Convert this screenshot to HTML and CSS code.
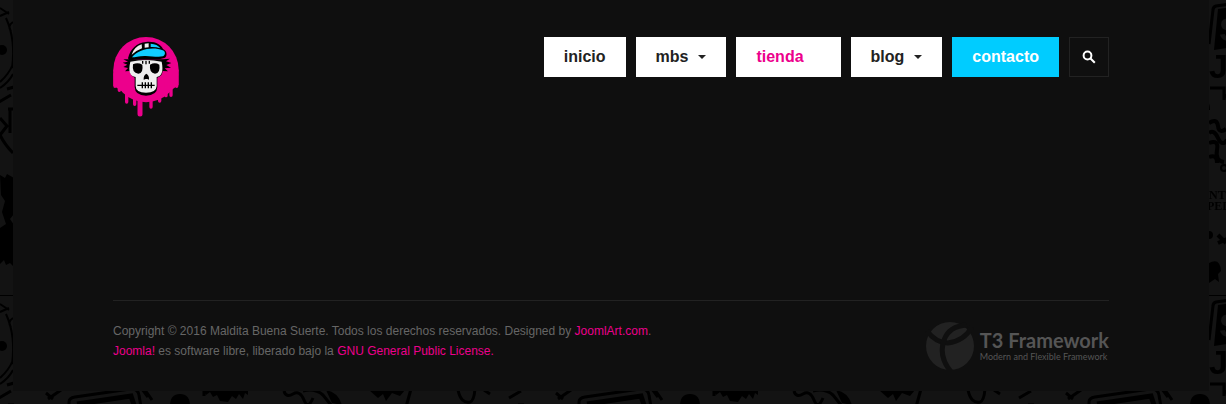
FILE: index.html
```html
<!DOCTYPE html>
<html lang="es">
<head>
    <meta charset="UTF-8">
    <meta name="viewport" content="width=device-width, initial-scale=1.0">
    <title>Maldita Buena Suerte</title>
    <link rel="stylesheet" href="styles.css">
</head>
<body>
    <!-- doodle wallpaper, one 510x296 tile -->
    <svg class="wallpaper" aria-hidden="true">
        <defs>
            <pattern id="doodles" x="-13" y="0" width="510" height="296" patternUnits="userSpaceOnUse">
                <g fill="none" stroke="#000" stroke-width="3">
                    <path d="M0 295.500H510" stroke-width="1"/>
                    <path d="M13 16l9-4M13 8l9 6M19 18q10 22 6 50M26 22q-6 4-2 9M13 82q9-8 13-18M13 88q9-6 13-14" stroke-width="2"/>
                    <path d="M12 102l12-7M20 89l7-2M13 118l7 8-7 9M13 135q5 10 13 18M21 109h6M23 109v24"/>
                    <path d="M61 103l13-9M59 97l7 6M158 94l7 10M155 93l6 8"/>
                    <path d="M82 112v-6q0-4 6-5l55-8q8-1 9 6l2 12"/>
                    <path d="M90 108l54-8 3 9" stroke-width="5"/>
                    <path d="M223 4l-14 2q-3 1-3 4l-4 34M203 88h14v12"/>
                    <path d="M202 123q8-5 9 3t8 3M202 133q5-4 9 5t9 2M202 143q10-4 8 7t7 12M202 157q8-3 8 6" stroke-width="4"/>
                    <circle cx="217" cy="168" r="3" stroke-width="2"/>
                    <path d="M297 95q2 7 9 3t11 6 9-2M316 95q12-3 20 4l8 10M424 93l-5 18M471 94q3 14 12 12 4-1 5-13M497 94l6 4"/>
                    <path d="M211 235l8 8M211 243l9-4" stroke-width="4"/>
                </g>
                <circle cx="15" cy="50" r="5"/>
                <path d="M13 175l5 3 2-4 7 4v36l-4 5 4 6v42l-4-4-4 2-2-5-4 4v-36l6-4-4-12 3-11-4-6z"/>
                <path d="M183 110q0-12 10-12t10 12zM216 94h45v5l-3-2-2 6-4-5-3 5-4-3-4 6-8-1-3-6-4 2-3-5-4 3zM382 94l9 8 5-4 3 7 6-8 8 3 5-6zM339 94q12 2 16 15l-10-2z"/>
                <path d="M202 263q11-6 12 8l-3 3 1 8-4-3-6 4z"/>
                <circle cx="202" cy="235" r="4"/>
                <path d="M211 9l15-2v40l-19 3z"/>
                <g class="doodle-text">
                    <text class="big hollow" x="212" y="41">SU</text>
                    <text class="big" x="202" y="78">JU</text>
                    <text x="202" y="199">NTO</text>
                    <text x="200" y="210">PED</text>
                </g>
            </pattern>
        </defs>
        <rect width="100%" height="100%" fill="url(#doodles)"/>
    </svg>

    <div class="wrapper">
        <header class="header">
            <a class="logo" href="#" aria-label="Maldita Buena Suerte">
                <svg viewBox="9 9 201 240" width="67" height="80">
                    <circle class="blob" cx="108" cy="107" r="98"/>
                    <path class="blob" d="M10 107v48l42 26 30 18h50l34-18 40-28v-46z"/>
                    <path class="drips" d="M15 120v37M28 140v29M50 160v44M74 170v41M123 170v49M149 160v41M168 150v35M183 140v44M200 120v37"/>
                    <path class="drips wide" d="M90 180v60"/>
                    <!-- head and hair -->
                    <path d="M58 76l-18 0 14 7-16 3 14 6-12 7 14 3-9 10 14-1q3 15 15 20v28q1 26 34 26t34-26v-28q15-5 16-20l16 1-10-9 19-2-14-8 15-6-16-5 12-8-21 2z"/>
                    <path class="bone" d="M61 83q47-10 94 0c6 30 0 43-15 46v27q-1 20-32 20t-31-20v-27c-17-3-23-16-16-46z"/>
                    <path d="M69 91q14-7 28 1 4 25-12 27-20-1-16-28zM120 92q15-8 28 0 4 25-13 27-18-3-15-27zM109 119q9 5 8 18l-5-2h-5l-6 2q-1-13 8-18z"/>
                    <path class="teeth" d="M82 154h52M97 145v18M106 145v18M115 145v18M124 145v18M98 81v8M108 80v11M118 81v8"/>
                    <!-- cycling cap -->
                    <path d="M54 73C61 44 80 27 108 24c28-3 45 8 51 21 14 6 13 24 4 27-17 6-32 3-57 3-24-1-35 2-48 4z"/>
                    <path class="bone" d="M65 62q8-24 30-31l1 12q-14 5-31 19zM104 29l12-1v12l-12 1z"/>
                    <path class="cap" d="M122 29q20 1 29 14-14-5-29-4zM66 70c19-25 64-33 92-21 10 4 8 15 1 18-16 4-38-2-56-1-16 1-28 4-37 4z"/>
                </svg>
            </a>

            <nav class="menu">
                <a href="#">inicio</a>
                <a href="#">mbs <span class="caret"></span></a>
                <a class="shop" href="#">tienda</a>
                <a href="#">blog <span class="caret"></span></a>
                <a class="contact" href="#">contacto</a>
                <button class="search" type="button" aria-label="Buscar">
                    <svg viewBox="0 0 14 14" width="14" height="14">
                        <circle cx="5.500" cy="5.500" r="3.900"/>
                        <path d="M8.300 8.300l4.500 4.500"/>
                    </svg>
                </button>
            </nav>
        </header>

        <footer class="footer">
            <div class="copyright">
                <p>Copyright © 2016 Maldita Buena Suerte. Todos los derechos reservados. Designed by <a href="#">JoomlArt.com</a>.</p>
                <p><a href="#">Joomla!</a> es software libre, liberado bajo la <a href="#">GNU General Public License.</a></p>
            </div>
            <a class="t3" href="#">
                <svg viewBox="0 0 50 50" width="50" height="50" aria-hidden="true">
                    <circle class="ball" cx="25" cy="25" r="24"/>
                    <path class="cut" d="M2 10Q11 22 23 22 39 20 47 6"/>
                    <path class="cut" d="M42 4Q24 5 19 19 13 36 27 52"/>
                </svg>
                <span class="t3-text">
                    <span class="t3-name">T3 Framework</span>
                    <span class="t3-sub">Modern and Flexible Framework</span>
                </span>
            </a>
        </footer>
    </div>
</body>
</html>
```

FILE: styles.css
```css
body {
    margin: 0;
    background-color: #131313;
    font-family: "Liberation Sans", Arial, sans-serif;
    font-size: 12px;
    line-height: 20px;
    color: #666;
}

a {
    color: #ec008c;
    text-decoration: none;
}

.wallpaper {
    position: fixed;
    top: 0;
    left: 0;
    z-index: -1;
    width: 100%;
    height: 100%;
}

.doodle-text {
    font-family: "Liberation Serif", serif;
    font-size: 12px;
    font-weight: bold;
}

.doodle-text .big {
    font-family: "Liberation Sans", Arial, sans-serif;
    font-size: 34px;
}

.doodle-text .hollow {
    fill: #131313;
}

.wrapper {
    box-sizing: border-box;
    margin: 0 17px 13px 13px;
    padding: 37px 100px 20px;
    background-color: #0f0f0f;
}

.header {
    display: flex;
    justify-content: space-between;
    align-items: flex-start;
    margin-bottom: 183px;
}

.logo svg {
    display: block;
}

.blob {
    fill: #ec008c;
}

.drips {
    fill: none;
    stroke: #ec008c;
    stroke-width: 10;
    stroke-linecap: round;
}

.drips.wide {
    stroke-width: 15;
}

.bone {
    fill: #eee;
}

.cap {
    fill: #1cf;
}

.teeth {
    fill: none;
    stroke: #000;
    stroke-width: 4;
}

.menu {
    display: flex;
    gap: 10px;
}

.menu a {
    display: flex;
    align-items: center;
    gap: 10px;
    height: 40px;
    padding: 0 20px;
    background-color: #fff;
    color: #222;
    font-size: 16px;
    font-weight: bold;
}

.menu .shop {
    padding-right: 37px;
    color: #ec008c;
}

.menu .contact {
    background-color: #0cf;
    color: #fff;
}

.caret {
    border-top: 4px solid #222;
    border-left: 4px solid transparent;
    border-right: 4px solid transparent;
}

.search {
    display: flex;
    align-items: center;
    justify-content: center;
    width: 40px;
    height: 40px;
    padding: 0;
    border: 1px solid #222;
    background: none;
    cursor: pointer;
}

.search svg {
    fill: none;
    stroke: #fff;
    stroke-width: 2;
}

/* Footer */
.footer {
    display: flex;
    justify-content: space-between;
    align-items: flex-start;
    padding-top: 20px;
    border-top: 1px solid #222;
}

.copyright p {
    margin: 0;
}

.t3 {
    display: flex;
    align-items: center;
    gap: 5px;
    color: #555;
}

.ball {
    fill: #222;
}

.cut {
    fill: none;
    stroke: #0f0f0f;
    stroke-width: 5;
}

.t3-text {
    display: flex;
    flex-direction: column;
}

.t3-name {
    font-family: Lato, sans-serif;
    font-size: 20px;
    font-weight: bold;
    line-height: 22px;
}

.t3-sub {
    font-family: Lato, sans-serif;
    font-size: 9px;
    line-height: 12px;
}
```
